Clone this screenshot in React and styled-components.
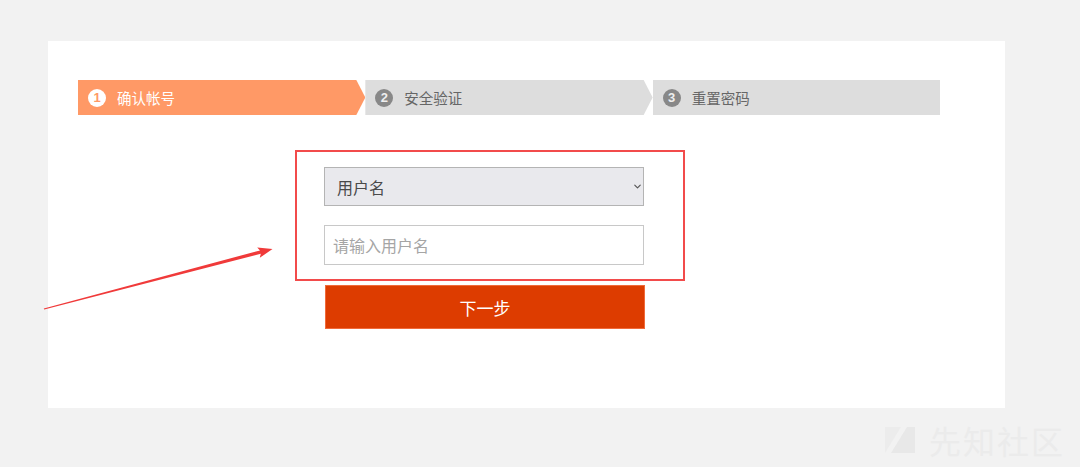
import React from 'react';
import styled, { createGlobalStyle } from 'styled-components';
import { ChevronDown } from 'lucide-react';

const GlobalStyle = createGlobalStyle`
  html, body {
    margin: 0;
    padding: 0;
    background: #f2f2f2;
    font-family: "Microsoft YaHei", "Noto Sans CJK SC", "Noto Sans", sans-serif;
  }
`;

const Page = styled.div`
  position: relative;
  width: 1080px;
  height: 467px;
  padding: 41px 0 0 48px;
  box-sizing: border-box;
  overflow: hidden;
`;

const Card = styled.div`
  width: 957px;
  height: 367px;
  background: #fff;
  padding: 39px 30px 0;
  box-sizing: border-box;
`;

const Steps = styled.div`
  display: flex;
  width: 862px;
  height: 35px;
`;

const Step = styled.div`
  flex: 1;
  display: flex;
  align-items: center;
  gap: 11px;
  padding-left: 10px;
  background: ${(p) => (p.active ? '#ff9966' : '#dddddd')};
  color: ${(p) => (p.active ? '#fff' : '#666')};
  font-size: 14.5px;
  clip-path: ${(p) => (p.last
    ? 'none'
    : 'polygon(0 0, calc(100% - 9px) 0, 100% 50%, calc(100% - 9px) 100%, 0 100%)')};
`;

const Num = styled.span`
  width: 18px;
  height: 18px;
  border-radius: 50%;
  display: flex;
  align-items: center;
  justify-content: center;
  font-size: 13px;
  font-weight: bold;
  font-family: "Liberation Sans", Arial, sans-serif;
  background: ${(p) => (p.active ? '#fff' : '#888')};
  color: ${(p) => (p.active ? '#ff9966' : '#eee')};
`;

const Form = styled.div`
  display: flex;
  flex-direction: column;
  margin: 35px 0 0 217px;
`;

const Marked = styled.div`
  width: 390px;
  height: 131px;
  box-sizing: border-box;
  border: 2px solid #f24b4b;
  padding: 15px 39px 0 27px;
  display: flex;
  flex-direction: column;
  gap: 19px;
`;

const SelectWrap = styled.div`
  position: relative;
  width: 320px;
  height: 39px;
`;

const Select = styled.select`
  appearance: none;
  width: 100%;
  height: 100%;
  box-sizing: border-box;
  border: 1px solid #b4b4b4;
  border-radius: 0;
  background: #e9e9ed;
  color: #4a4a4a;
  font-size: 16px;
  font-family: inherit;
  padding: 0 0 0 12px;
  outline: none;
`;

const Chevron = styled(ChevronDown)`
  position: absolute;
  right: 1px;
  top: 14px;
  width: 11px;
  height: 11px;
  color: #555;
  pointer-events: none;
`;

const Input = styled.input`
  width: 320px;
  height: 40px;
  box-sizing: border-box;
  border: 1px solid #c8c8c8;
  font-size: 16px;
  font-family: inherit;
  padding: 0 8px;
  outline: none;
  &::placeholder {
    color: #a5a5a5;
  }
`;

const Button = styled.button`
  width: 320px;
  height: 44px;
  margin: 4px 0 0 30px;
  border: 1px solid #f06a3a;
  background: #dd3c00;
  color: #fff;
  font-size: 17px;
  font-family: inherit;
  cursor: pointer;
`;

const Pointer = styled.svg`
  position: absolute;
  left: 0;
  top: 0;
  pointer-events: none;
`;

const Watermark = styled.div`
  position: absolute;
  right: 15px;
  bottom: 4px;
  display: flex;
  align-items: center;
  gap: 12px;
  color: #ebebeb;
  font-size: 32px;
  letter-spacing: 2px;
`;

const steps = ['确认帐号', '安全验证', '重置密码'];

export default function App() {
  return (
    <Page>
      <GlobalStyle />
      <Card>
        <Steps>
          {steps.map((label, i) => (
            <Step key={label} active={i === 0} last={i === steps.length - 1}>
              <Num active={i === 0}>{i + 1}</Num>
              {label}
            </Step>
          ))}
        </Steps>
        <Form>
          <Marked>
            <SelectWrap>
              <Select defaultValue="username">
                <option value="username">用户名</option>
                <option value="phone">手机号</option>
                <option value="email">邮箱</option>
              </Select>
              <Chevron strokeWidth={2.5} />
            </SelectWrap>
            <Input type="text" placeholder="请输入用户名" />
          </Marked>
          <Button type="button">下一步</Button>
        </Form>
      </Card>
      <Pointer width="1080" height="467" viewBox="0 0 1080 467">
        <polygon
          points="43.8,308.6 44.2,309.6 260.8,253.8 259.8,257.8 272.5,249 257.2,247.4 260,250.4"
          fill="#f03a3a"
        />
      </Pointer>
      <Watermark>
        <svg width="34" height="34" viewBox="0 0 34 34">
          <polygon points="2,4 18,4 2,30" fill="#ececec" />
          <polygon points="24,4 32,4 32,30 8,30" fill="#e8e8e8" />
        </svg>
        先知社区
      </Watermark>
    </Page>
  );
}
